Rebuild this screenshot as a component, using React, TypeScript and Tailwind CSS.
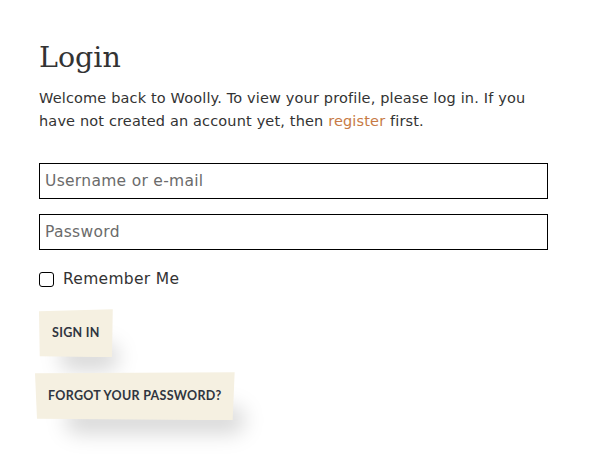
import { FC, ReactNode } from 'react';

const sans = "font-['DejaVu_Sans',sans-serif]";

const PaperButton: FC<{ children: ReactNode; wide?: boolean }> = ({ children, wide }) => {
  return (
    <div className="relative inline-block">
      {/* soft shadow under the paper */}
      <div
        className={`absolute top-[34px] h-[28px] rounded-full bg-black/15 blur-[10px] ${
          wide ? 'left-[30px] w-[180px]' : 'left-[20px] w-[60px]'
        }`}
      />
      <button
        className={`relative bg-[#f5f0e1] text-[#2f3540] font-['Lato',sans-serif] font-bold text-[12.5px] tracking-[0.3px] h-[48px] ${
          wide
            ? 'px-[13px] [clip-path:polygon(0_1px,100%_0,99%_100%,1%_97%)]'
            : 'px-[13px] [clip-path:polygon(0_2px,100%_0,99%_100%,1%_98%)]'
        }`}
      >
        {children}
      </button>
    </div>
  );
};

const App: FC = () => {
  return (
    <div className="w-[600px] h-[462px] bg-white pl-[39px] pr-[52px] pt-[38px] text-[#333]">
      <h1 className="font-['DejaVu_Serif',serif] text-[28.5px] leading-[40px] text-[#333]">Login</h1>
      <p className={`${sans} text-[14.5px] tracking-[0.15px] leading-[23px] mt-[9px] text-[#333]`}>
        Welcome back to Woolly. To view your profile, please log in. If you have not created an
        account yet, then <span className="text-[#c77a45]">register</span> first.
      </p>

      <form className="mt-[30px] flex flex-col">
        <input
          placeholder="Username or e-mail"
          className={`${sans} w-full h-[36px] border border-black px-[5px] text-[15.5px] tracking-[0.3px] placeholder:text-[#6b6b6b] outline-none`}
        />
        <input
          placeholder="Password"
          type="password"
          className={`${sans} mt-[15px] w-full h-[36px] border border-black px-[5px] text-[15.5px] tracking-[0.3px] placeholder:text-[#6b6b6b] outline-none`}
        />
        <label className={`${sans} mt-[18px] flex items-center gap-[9px] text-[15.5px] tracking-[0.3px] text-[#333]`}>
          <span className="w-[15px] h-[15px] border-[1.5px] border-black rounded-[3px]" />
          Remember Me
        </label>

        <div className="mt-[18px]">
          <PaperButton>SIGN IN</PaperButton>
        </div>
        <div className="mt-[15px] -ml-[4px]">
          <PaperButton wide>FORGOT YOUR PASSWORD?</PaperButton>
        </div>
      </form>
    </div>
  );
};

export default App;
